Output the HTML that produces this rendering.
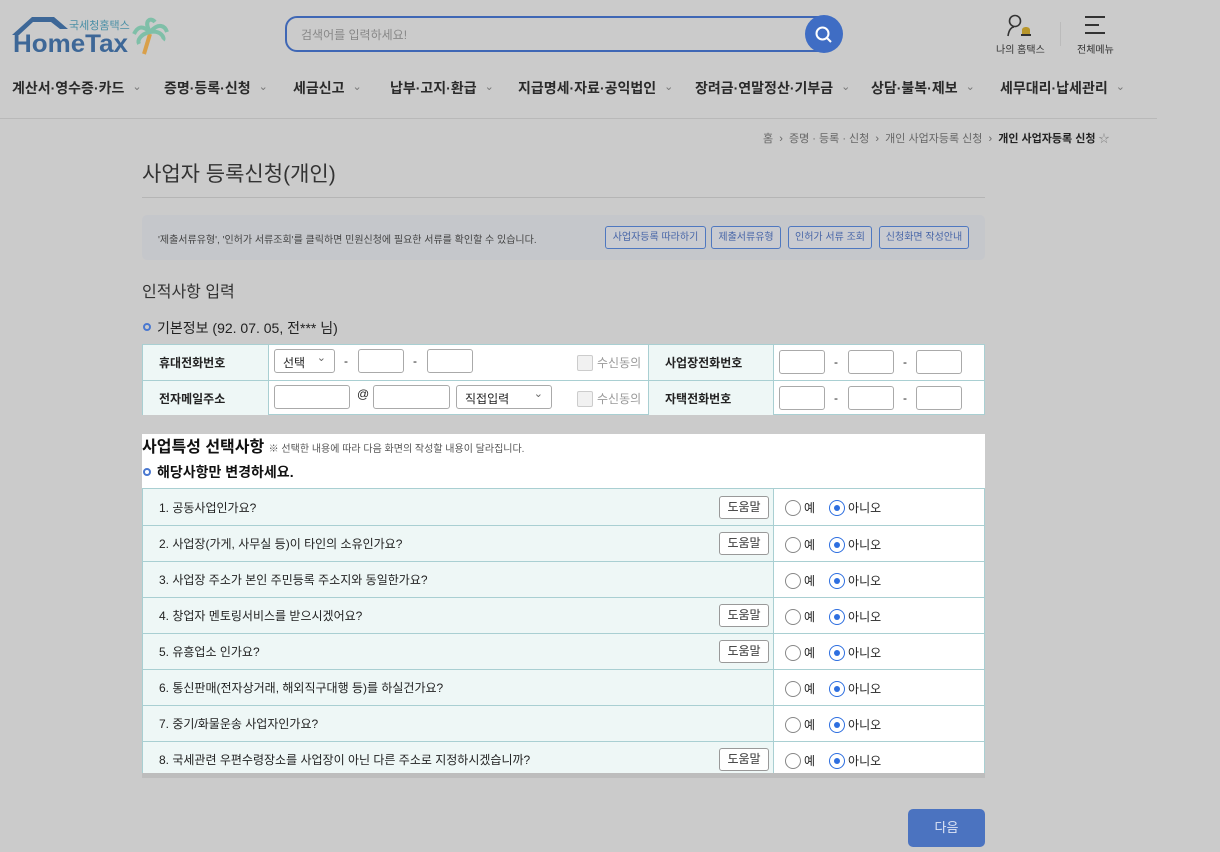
<!DOCTYPE html>
<html><head><meta charset="utf-8">
<style>
*{box-sizing:border-box;margin:0;padding:0}
body{width:1220px;height:852px;background:#cbcbcb;font-family:"Liberation Sans","Noto Sans CJK KR",sans-serif;color:#222;position:relative;overflow:hidden}
.abs{position:absolute}
.nav span{position:absolute;top:78px;font-size:14px;font-weight:bold;color:#2a2a2a;white-space:nowrap}
.nav span i{font-style:normal;font-weight:normal;color:#777;font-size:11px;margin-left:8px;position:relative;top:-3px}
.tbl{position:absolute;left:142px;width:843px;border:1px solid #a9cfd2;background:#fff}
.row{position:absolute;left:0;right:0;border-top:1px solid #a9cfd2}
.lab{position:absolute;top:0;bottom:0;background:#eef7f6;font-size:12px;font-weight:bold;color:#222;display:flex;align-items:center;padding-left:16px}
.inp{position:absolute;height:24px;border:1px solid #aaa;border-radius:3px;background:#fff}
.dash{position:absolute;font-size:12px}
.sel{position:absolute;height:24px;border:1px solid #aaa;border-radius:3px;background:#fff;font-size:12px;padding:4px 8px}
.sel:after{content:"⌄";position:absolute;right:8px;top:1px;color:#666;font-size:11px}
.chk{position:absolute;font-size:12px;color:#999}
.chk b{display:inline-block;width:16px;height:16px;border:1px solid #ccc;border-radius:2px;background:#f1f1f1;vertical-align:-4px;margin-right:4px}
.q{position:absolute;left:0;width:631px;background:#eef7f6;font-size:12px;color:#222;padding-left:16px;display:flex;align-items:center;border-right:1px solid #a9cfd2}
.help{position:absolute;left:576px;width:50px;height:23px;border:1px solid #999;border-radius:3px;background:#fff;font-size:12px;text-align:center;line-height:21px;color:#333}
.rad{position:absolute;left:642px;font-size:12px;display:flex;align-items:center}
.rad .o{width:16px;height:16px;border:1px solid #888;border-radius:50%;margin-right:3px;background:#fff}
.rad .s{width:16px;height:16px;border:1px solid #2e6fe0;border-radius:50%;margin:0 3px 0 14px;position:relative;background:#fff}
.rad .s:after{content:"";position:absolute;left:4px;top:4px;width:6px;height:6px;border-radius:50%;background:#2e6fe0}
.btn{position:absolute;top:226px;height:23px;border:1px solid #4f78c0;border-radius:3px;font-size:10px;color:#4866a8;text-align:center;line-height:21px;background:#c9cbd1}
</style></head><body>
<!-- logo -->
<svg class="abs" style="left:10px;top:14px" width="162" height="44" viewBox="0 0 162 44">
<path d="M2 21 L22 3 L44 3 L58 15 L50 15 L41 8 L23 8 L9 21 Z" fill="#3d6797"/>
<text x="3" y="38" font-family="Liberation Sans" font-weight="bold" font-size="25" fill="#3d6797" textLength="115" lengthAdjust="spacingAndGlyphs">HomeTax</text>
<text x="59" y="15" font-family="Noto Sans CJK KR" font-size="11" fill="#4a8fa6">국세청홈택스</text>
<path d="M140 20 L134 40" stroke="#d9a04a" stroke-width="4"/>
<path d="M140 18 C131 10 127 14 124 20 M140 18 C133 6 141 3 145 8 M140 18 C149 8 155 12 157 18 M140 18 C151 16 155 24 153 26 M140 18 C131 20 127 26 129 30" stroke="#7fbfa8" stroke-width="4" fill="none"/>
</svg>
<!-- search -->
<div class="abs" style="left:285px;top:16px;width:548px;height:36px;border:2px solid #3f67b5;border-radius:12px;background:#cbcbcb"></div>
<div class="abs" style="left:301px;top:26px;font-size:12px;color:#888">검색어를 입력하세요!</div>
<div class="abs" style="left:805px;top:15px;width:38px;height:38px;border-radius:50%;background:#3f6dc4"></div>
<svg class="abs" style="left:814px;top:25px" width="20" height="20"><circle cx="8.5" cy="8.5" r="6" stroke="#fff" stroke-width="2" fill="none"/><path d="M13 13 L17 17" stroke="#fff" stroke-width="2"/></svg>
<!-- right icons -->
<svg class="abs" style="left:1006px;top:14px" width="30" height="24"><circle cx="9" cy="7" r="5.5" stroke="#333" stroke-width="1.6" fill="none"/><path d="M2 22 C3 15 6 13 8 13" stroke="#333" stroke-width="1.6" fill="none"/><path d="M16 21 L16 16 C16 12 24 12 24 16 L24 21 Z" fill="#b8962a"/><rect x="15" y="20" width="10" height="2" fill="#333"/></svg>
<div class="abs" style="left:996px;top:41px;font-size:10px;color:#333">나의 홈택스</div>
<div class="abs" style="left:1060px;top:22px;width:1px;height:24px;background:#bbb"></div>
<div class="abs" style="left:1085px;top:16px;width:20px;height:2px;background:#333"></div>
<div class="abs" style="left:1085px;top:24px;width:14px;height:2px;background:#333"></div>
<div class="abs" style="left:1085px;top:32px;width:20px;height:2px;background:#333"></div>
<div class="abs" style="left:1077px;top:41px;font-size:10px;color:#333">전체메뉴</div>
<!-- nav -->
<div class="nav">
<span style="left:12px">계산서·영수증·카드<i>⌄</i></span>
<span style="left:164px">증명·등록·신청<i>⌄</i></span>
<span style="left:293px">세금신고<i>⌄</i></span>
<span style="left:390px">납부·고지·환급<i>⌄</i></span>
<span style="left:518px">지급명세·자료·공익법인<i>⌄</i></span>
<span style="left:695px">장려금·연말정산·기부금<i>⌄</i></span>
<span style="left:871px">상담·불복·제보<i>⌄</i></span>
<span style="left:1000px">세무대리·납세관리<i>⌄</i></span>
</div>
<div class="abs" style="left:0;top:118px;width:1157px;height:1px;background:#b9b9b9"></div>
<div class="abs" style="left:763px;top:130px;font-size:11px;color:#666;white-space:nowrap">홈 &nbsp;›&nbsp; 증명 · 등록 · 신청 &nbsp;›&nbsp; 개인 사업자등록 신청 &nbsp;›&nbsp; <b style="color:#222">개인 사업자등록 신청</b> <span style="color:#888">☆</span></div>
<div class="abs" style="left:142px;top:158px;font-size:21px;color:#333">사업자 등록신청(개인)</div>
<div class="abs" style="left:142px;top:197px;width:843px;height:1px;background:#b5b5b5"></div>
<!-- info box -->
<div class="abs" style="left:142px;top:215px;width:843px;height:45px;background:#c5c7cb;border-radius:5px"></div>
<div class="abs" style="left:158px;top:231px;font-size:10px;color:#444">'제출서류유형', '인허가 서류조회'를 클릭하면 민원신청에 필요한 서류를 확인할 수 있습니다.</div>
<div class="btn" style="left:605px;width:101px">사업자등록 따라하기</div>
<div class="btn" style="left:711px;width:70px">제출서류유형</div>
<div class="btn" style="left:788px;width:84px">인허가 서류 조회</div>
<div class="btn" style="left:879px;width:90px">신청화면 작성안내</div>
<div class="abs" style="left:142px;top:278px;font-size:16px;color:#333">인적사항 입력</div>
<div class="abs" style="left:143px;top:323px;width:8px;height:8px;border:2px solid #4a78d0;border-radius:50%"></div>
<div class="abs" style="left:157px;top:318px;font-size:14px;color:#222">기본정보 (92. 07. 05, 전*** 님)</div>
<!-- table 1 -->
<div class="tbl" style="top:344px;height:71px">
 <div class="lab" style="left:0;width:126px;height:35px;border-right:1px solid #a9cfd2">휴대전화번호</div>
 <div class="lab" style="left:505px;width:126px;height:35px;border-left:1px solid #a9cfd2;border-right:1px solid #a9cfd2">사업장전화번호</div>
 <div class="sel" style="left:131px;top:4px;width:61px">선택</div>
 <div class="dash" style="left:201px;top:9px">-</div>
 <div class="inp" style="left:215px;top:4px;width:46px"></div>
 <div class="dash" style="left:270px;top:9px">-</div>
 <div class="inp" style="left:284px;top:4px;width:46px"></div>
 <div class="chk" style="left:434px;top:9px"><b></b>수신동의</div>
 <div class="inp" style="left:636px;top:5px;width:46px"></div><div class="dash" style="left:691px;top:10px">-</div>
 <div class="inp" style="left:705px;top:5px;width:46px"></div><div class="dash" style="left:760px;top:10px">-</div>
 <div class="inp" style="left:773px;top:5px;width:46px"></div>
 <div class="row" style="top:35px;height:35px">
  <div class="lab" style="left:0;width:126px;border-right:1px solid #a9cfd2">전자메일주소</div>
  <div class="lab" style="left:505px;width:126px;border-left:1px solid #a9cfd2;border-right:1px solid #a9cfd2">자택전화번호</div>
  <div class="inp" style="left:131px;top:4px;width:76px"></div>
  <div class="dash" style="left:214px;top:6px">@</div>
  <div class="inp" style="left:230px;top:4px;width:77px"></div>
  <div class="sel" style="left:313px;top:4px;width:96px">직접입력</div>
  <div class="chk" style="left:434px;top:9px"><b></b>수신동의</div>
  <div class="inp" style="left:636px;top:5px;width:46px"></div><div class="dash" style="left:691px;top:10px">-</div>
  <div class="inp" style="left:705px;top:5px;width:46px"></div><div class="dash" style="left:760px;top:10px">-</div>
  <div class="inp" style="left:773px;top:5px;width:46px"></div>
 </div>
</div>
<!-- highlight -->
<div class="abs" style="left:142px;top:434px;width:843px;height:341px;background:#fff"></div>
<div class="abs" style="left:142px;top:433px;font-size:16px;font-weight:bold;color:#111">사업특성 선택사항 <span style="font-size:10px;font-weight:normal;color:#555">※ 선택한 내용에 따라 다음 화면의 작성할 내용이 달라집니다.</span></div>
<div class="abs" style="left:143px;top:468px;width:8px;height:8px;border:2px solid #4a78d0;border-radius:50%"></div>
<div class="abs" style="left:157px;top:462px;font-size:14px;font-weight:bold;color:#111">해당사항만 변경하세요.</div>
<div class="tbl" style="top:488px;height:287px;border-bottom:none">
 <div class="q" style="top:0;height:36px">1. 공동사업인가요?</div><div class="help" style="top:7px">도움말</div><div class="rad" style="top:10px"><span class="o"></span>예<span class="s"></span>아니오</div>
 <div class="row" style="top:36px;height:36px"><div class="q" style="top:0;height:35px">2. 사업장(가게, 사무실 등)이 타인의 소유인가요?</div><div class="help" style="top:6px">도움말</div><div class="rad" style="top:10px"><span class="o"></span>예<span class="s"></span>아니오</div></div>
 <div class="row" style="top:72px;height:36px"><div class="q" style="top:0;height:35px">3. 사업장 주소가 본인 주민등록 주소지와 동일한가요?</div><div class="rad" style="top:10px"><span class="o"></span>예<span class="s"></span>아니오</div></div>
 <div class="row" style="top:108px;height:36px"><div class="q" style="top:0;height:35px">4. 창업자 멘토링서비스를 받으시겠어요?</div><div class="help" style="top:6px">도움말</div><div class="rad" style="top:10px"><span class="o"></span>예<span class="s"></span>아니오</div></div>
 <div class="row" style="top:144px;height:36px"><div class="q" style="top:0;height:35px">5. 유흥업소 인가요?</div><div class="help" style="top:6px">도움말</div><div class="rad" style="top:10px"><span class="o"></span>예<span class="s"></span>아니오</div></div>
 <div class="row" style="top:180px;height:36px"><div class="q" style="top:0;height:35px">6. 통신판매(전자상거래, 해외직구대행 등)를 하실건가요?</div><div class="rad" style="top:10px"><span class="o"></span>예<span class="s"></span>아니오</div></div>
 <div class="row" style="top:216px;height:36px"><div class="q" style="top:0;height:35px">7. 중기/화물운송 사업자인가요?</div><div class="rad" style="top:10px"><span class="o"></span>예<span class="s"></span>아니오</div></div>
 <div class="row" style="top:252px;height:35px"><div class="q" style="top:0;height:34px">8. 국세관련 우편수령장소를 사업장이 아닌 다른 주소로 지정하시겠습니까?</div><div class="help" style="top:6px">도움말</div><div class="rad" style="top:10px"><span class="o"></span>예<span class="s"></span>아니오</div></div>
</div>
<div class="abs" style="left:142px;top:773px;width:843px;height:5px;background:#bdbdbd"></div>
<div class="abs" style="left:908px;top:809px;width:77px;height:38px;background:#4b73c0;border-radius:5px;color:#dde5f5;font-size:13px;text-align:center;line-height:38px">다음</div>
</body></html>
